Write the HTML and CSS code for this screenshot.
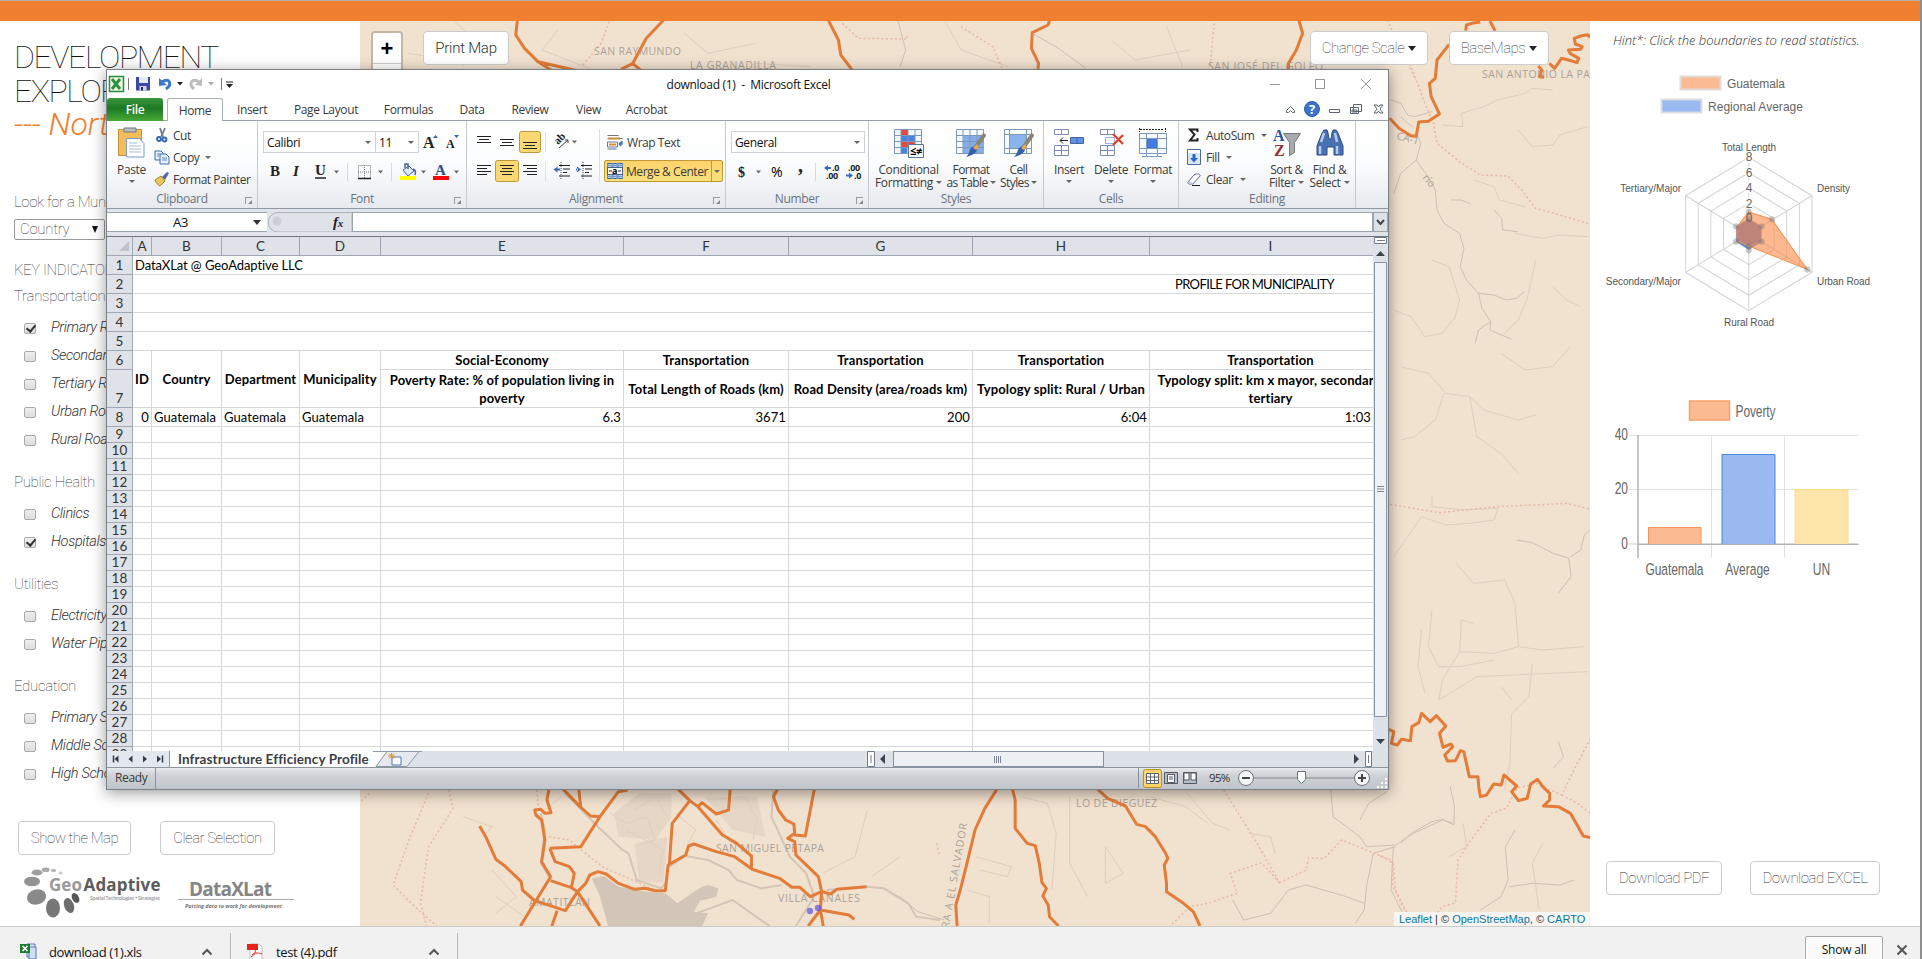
FILE: index.html
```html
<!DOCTYPE html>
<html lang="en">
<head>
<meta charset="utf-8">
<title>Development Explorer</title>
<link rel="stylesheet" href="styles.css">
</head>
<body>
<div class="page">
<header class="topbar"></header>
<main class="columns">

<aside class="sidebar">
  <h1>DEVELOPMENT<br>EXPLORER<br><em>--- Northern</em></h1>
  <p class="lead">Look for a Municipality</p>
  <div class="select"><span>Country</span><i></i></div>
  <p class="lead key">KEY INDICATORS</p>
  <section class="first"><h2>Transportation</h2>
    <label><b class="cb on"></b>Primary Roads</label><label><b class="cb"></b>Secondary Roads</label><label><b class="cb"></b>Tertiary Roads</label><label><b class="cb"></b>Urban Roads</label><label><b class="cb"></b>Rural Roads</label></section>
  <section><h2>Public Health</h2>
    <label><b class="cb"></b>Clinics</label><label><b class="cb on"></b>Hospitals</label></section>
  <section><h2>Utilities</h2>
    <label><b class="cb"></b>Electricity</label><label><b class="cb"></b>Water Pipes</label></section>
  <section><h2>Education</h2>
    <label><b class="cb"></b>Primary School</label><label><b class="cb"></b>Middle School</label><label><b class="cb"></b>High School</label></section>
  <div class="side-buttons"><button class="btn show">Show the Map</button><button class="btn clear">Clear Selection</button></div>
  <svg class="logos" viewBox="0 860 360 60" width="360" height="60">
    <g fill="#8a8a8a"><ellipse cx="60.5" cy="873" rx="2" ry="1.5" fill="#ccc"/><ellipse cx="53.5" cy="870.5" rx="2.8" ry="1.7" fill="#bbb"/><ellipse cx="45.7" cy="869.8" rx="4" ry="2.3" fill="#aaa"/><ellipse cx="37" cy="872.5" rx="5.5" ry="3" fill="#a0a0a0"/><ellipse cx="32" cy="881.5" rx="8" ry="4.8" fill="#939393"/><ellipse cx="36.5" cy="897" rx="9.7" ry="7.6" transform="rotate(-15 36.5 897)"/><ellipse cx="53" cy="908" rx="7" ry="9.5" fill="#777"/><ellipse cx="69" cy="905.5" rx="4.8" ry="7.8" fill="#6d6d6d" transform="rotate(-20 69 905.5)"/><ellipse cx="75.5" cy="898" rx="3.3" ry="5.3" fill="#555" transform="rotate(-30 75.5 898)"/></g>
    <g class="brand"><text x="49" y="890.5" font-size="17" fill="#999" textLength="33">Geo</text><text x="83.5" y="890.5" font-size="17" fill="#5c5c5c" textLength="77">Adaptive</text><text x="90" y="900" font-size="5" fill="#aaa" textLength="70">Spatial Technologies + Strategies</text><text x="189" y="896" font-size="19" fill="#858585" textLength="83">DataXLat</text><text x="185" y="908" font-size="5.5" font-style="italic" fill="#777" textLength="97">Putting data to work for development</text></g>
    <path d="M178 899.5H294" stroke="#aaa"/>
  </svg>
</aside>

<div class="map">
<svg class="map-canvas" viewBox="360 21 1230 905" width="1230" height="905">
  <g class="faint">
    <g transform="translate(1380 0) scale(.34566 .33333)">
      <path class="river" d="M40 580 60 520 105 480 118 430 110 410M105 480 135 525 160 570 165 630 185 670 230 700 243 745 232 800 250 840 285 880 295 925 320 965 318 990 380 1018M285 880 330 885 365 900 395 895 418 875M320 965 285 990 275 1030M205 600 235 600 262 612M330 630 352 655 355 690 398 695M30 300 60 310 80 345 100 350 150 335M95 380 80 370 60 350"/>
      <path d="M180 375 240 380 235 340 300 320 340 300 420 280 440 265 500 270M400 390 440 440 500 435 520 405 600 380M270 540 330 560 345 600 420 620M390 700 470 715 520 705 600 710M150 780 200 800 230 900 215 960M450 780 440 830 425 900 400 960 360 1000M40 930 90 950 130 1010 180 1000 210 960M60 1100 140 1120 190 1180 260 1190 300 1230 400 1260 450 1245M500 860 540 900 580 920M550 1040 500 1100 420 1110 350 1060M185 1180 160 1260 100 1310 60 1320M260 1190 280 1310 350 1360 400 1420"/>
    </g>
    <g transform="translate(1380 480) scale(.34626 .33333)">
      <path class="river" d="M395 180 440 188 500 220 545 235 552 290 515 340M550 230 580 210 590 165 606 150M515 785 530 830 500 865M60 1090 90 1060 150 1025 180 1018 213 1035 215 980 203 920M390 1050 362 1100 370 1200 350 1250 290 1290M375 1220 440 1210 520 1215 560 1200"/>
      <path d="M150 50 150 80 240 90 340 85 330 120 260 130 190 135 120 110 40 230M220 250 270 310 360 300 390 370 400 500 330 520 230 515 235 420 270 430M400 500 470 510 590 500M150 390 140 500 170 560 230 560 330 540M440 550 430 650 380 700 375 850 360 930M350 620 380 660M120 450 110 560 130 640M230 515 180 600 170 660 280 590 600 575M470 1090 440 1150 460 1290M240 1030 250 1100 200 1130"/>
    </g>
    <g transform="translate(900 730) scale(.44643 .33333)">
      <path class="river" d="M0 500 40 545 100 570M965 180 970 260 1030 320 1045 350 1110 345 1150 310 1215 270 1240 280M1110 350 1060 370 1045 470 1040 540 1020 580M745 510 770 570 830 550 870 480 910 465 1000 500 1040 520M1030 270 1050 220 1090 185M1105 350 1100 480 1130 560"/>
      <path d="M270 200 330 220 350 310 340 480M170 380 250 410 240 440 180 420M380 200 380 400 420 500M460 350 500 430 460 460ZM640 185 700 280 740 300M560 200 640 230 690 280M780 310 830 320 840 370M150 480 200 500 200 580"/>
    </g>
    <g transform="translate(300 730) scale(.40816 .33333)">
      <path class="wide" d="M590 250 600 300 590 400 610 440M650 190 730 290 790 360 805 370 825 450 885 475 895 460M905 410 945 378 1000 390 1050 420 1070 450 1130 475 1180 465M1160 180 1155 260 1200 380 1240 430 1260 500 1215 588M1290 480 1390 470 1430 475 1490 520 1510 560 1568 570M970 550 1060 510 1150 588"/>
      <path d="M400 260 470 290 450 320M640 200 600 240M760 250 800 280 850 260 870 330 820 350M800 300 890 360 880 430M920 250 970 300 950 340M1000 210 1090 200 1120 270 1110 330M1020 270 1060 350M900 260 870 200M860 210 820 240M1280 430 1360 380 1390 240M470 420 530 500 480 550M480 500 550 560M680 500 730 580M1400 440 1470 380"/>
      <path class="urban" d="M770 250 830 190 910 190 910 260 870 330 780 320ZM990 200 1120 200 1140 320 1060 300ZM820 340 900 320 890 460 830 450Z"/>
    </g>
    <g transform="translate(360 0) scale(.79083 .33333)"><path class="river" d="M680 60 690 150 683 200M850 100 880 140 918 205"/><path d="M60 160 120 180 170 150M120 65 145 120 130 200M250 90 230 150 290 205M410 100 440 160 500 130M500 190 570 200M740 65 760 150 820 200M950 120 980 180 1050 150M1020 80 1040 200"/></g>
  </g>
  <g class="dots">
    <path transform="translate(1380 0) scale(.34566 .33333)" d="M20 60 60 140 90 200 130 310 155 370 165 430 230 485 290 525 370 528 410 570 450 625 520 645 608 672"/>
    <path transform="translate(1380 480) scale(.34626 .33333)" d="M30 73 170 98 340 80 540 70 608 88M608 775 560 870 525 945 450 910 395 925 365 985 320 1000 270 1070 225 1140 218 1268 180 1280 150 1320M525 945 570 970 608 1000M0 1128 35 1140 38 1220 70 1290"/>
    <path transform="translate(900 730) scale(.44643 .33333)" d="M725 180 800 340 850 458 910 420 915 385 950 385 990 330 1080 380 1105 400 1110 480 1140 560M850 458 810 398 740 430 755 490 690 520 650 530 605 588"/>
    <path transform="translate(300 730) scale(.40816 .33333)" d="M170 190 110 260M315 190 270 320 228 465 290 540 335 588M365 180 375 235 315 350 295 520 310 588M580 180 585 240M610 320 660 330 740 410 870 480 920 520M1560 340 1568 380"/>
    <path transform="translate(360 0) scale(.79083 .33333)" d="M315 65 305 130 280 200M610 70 630 115 692 117 692 100M760 80 800 140 812 205M1080 70 1075 200M1325 190 1335 240"/>
  </g>
  <path class="lake" transform="translate(300 730) scale(.40816 .33333)" d="M715 445 745 438 780 470 850 485 895 490 925 520 960 490 985 470 1000 465 1025 475 1020 500 980 512 965 545 1000 550 985 588 755 588 735 500Z"/>
  <g class="place">
    <text x="594" y="55" textLength="87">SAN RAYMUNDO</text><text x="690" y="69" textLength="86">LA GRANADILLA</text><text x="1208" y="70" textLength="115">SAN JOSÉ DEL GOLFO</text><text x="1482" y="78" textLength="108">SAN ANTONIO LA PA</text><text x="716" y="852" textLength="108">SAN MIGUEL PETAPA</text><text x="529" y="906" textLength="61">AMATITLÁN</text><text x="778" y="902" textLength="82">VILLA CANALES</text><text x="1076" y="807" textLength="81">LO DE DIEGUEZ</text>
    <text transform="translate(945 950) rotate(-80)" textLength="128">RRERA A EL SALVADOR</text><text transform="translate(1422 178) rotate(50)">río</text><text transform="translate(1396 139) rotate(15)">CA-1</text>
  </g>
  <g class="roads">
    <path transform="translate(360 0) scale(.79083 .33333)" d="M199 60 197 105 208 145 225 185 245 215M225 185 275 212M384 60 362 115 345 190 330 208M345 190 357 215M592 60 605 120 608 165 623 212M872 60 870 75 850 98 849 145 858 190 857 212M1187 60 1192 100 1184 150 1174 190 1174 212"/>
    <path transform="translate(1380 0) scale(.34566 .33333)" d="M248 92 250 75 265 70 290 66M318 63 333 92M200 133 165 180 160 235 143 250 148 290 172 342 140 364 112 366 105 408 90 408 55 385 28 355M608 112 600 104 580 108 562 115 565 132 585 140 580 148 545 150 550 160 575 175 570 188 545 180 525 175 505 205 490 190M458 198 468 210 462 230 475 232"/>
    <path transform="translate(1380 480) scale(.34626 .33333)" d="M25 748 40 755 33 790 50 795 62 778 88 782 92 740 112 728 120 700 145 725 163 707 190 738 172 760 182 802 205 792 210 800 187 825 195 843 218 842 232 812 242 815 258 890 283 890 285 920 290 950 308 945 328 912 350 915 358 885 395 918 380 935 400 962 425 955 435 912 455 898 470 920 490 940 490 960 472 978 515 980 550 1000 587 1068 608 1073"/>
    <path transform="translate(300 730) scale(.40816 .33333)" d="M440 288 455 320 480 388 502 408 542 455 545 480 575 512 650 542 680 485 700 460 710 435 730 425 750 432 780 460 820 478 845 475 870 482 895 482 902 405 945 375 952 348 965 342 1020 365 1065 380 1108 418 1175 445 1205 472 1225 472 1250 500 1278 485 1300 492 1315 478 1388 470M610 178 605 210 615 248 600 250 590 238 575 240 578 255 592 270 600 330 592 395 614 440 540 588M614 452 665 473 680 485 735 588M612 355 625 395 660 410 672 430 665 473M612 355 688 350 735 260 780 185 803 180M645 178 688 232 712 258 737 260M683 178 688 232M925 176 955 212 912 280 905 402M955 212 975 230 1035 315 1070 340 1106 378 1106 415M975 230 985 218 1020 252 1050 240 1054 178M1170 178 1160 200 1172 240 1190 270 1210 282 1212 310 1195 325 1212 335 1215 375 1270 440 1278 485 1275 540 1245 588M1210 315 1238 318 1260 178M1275 540 1345 555 1358 568M1275 540 1282 588M630 542 617 588"/>
    <path transform="translate(900 730) scale(.44643 .33333)" d="M217 178 190 235 168 300 150 400 135 480 125 525 128 588M252 178 258 210 258 295 285 340 303 347 312 400 318 458 328 475 320 498 332 525 335 560 355 588M443 178 465 205 505 228 530 283 550 290 572 320 595 370 600 385 592 405 597 460 597 485 635 520 657 545 672 588"/>
  </g>
  <circle cx="810" cy="911" r="3.2" fill="#4f46e5" opacity=".65"/><circle cx="818" cy="908" r="3.2" fill="#4f46e5" opacity=".65"/>
</svg>
<div class="map-tools"><div class="zoom"><b>+</b></div><button class="btn print">Print Map</button><button class="btn scale">Change Scale<i></i></button><button class="btn base">BaseMaps<i></i></button></div>
<div class="credit"><a>Leaflet</a> | © <a>OpenStreetMap</a>, © <a>CARTO</a></div>
</div>

<aside class="stats">
  <p class="hint">Hint*: Click the boundaries to read statistics.</p>
  <svg class="charts" viewBox="1590 60 330 530" width="330" height="530">
    <g font-size="12" fill="#666">
      <rect x="1680.5" y="76.5" width="40" height="13" fill="#fcba92" stroke="#e2dcd8" stroke-width="2"/><text x="1727" y="87.5" textLength="58">Guatemala</text>
      <rect x="1661.5" y="99.5" width="40" height="13" fill="#99b9f0" stroke="#dadde2" stroke-width="2"/><text x="1708" y="111" textLength="95">Regional Average</text>
    </g>
    <g transform="translate(1748.8 234) scale(1 1.05)">
      <g fill="none" stroke="#d4d4d4"><path d="M0-73 63.2-36.5V36.5L0 73-63.2 36.5V-36.5Z"/><path d="M0-58.4 50.6-29.2V29.2L0 58.4-50.6 29.2V-29.2Z"/><path d="M0-43.8 37.9-21.9V21.9L0 43.8-37.9 21.9V-21.9Z"/><path d="M0-29.2 25.3-14.6V14.6L0 29.2-25.3 14.6V-14.6Z"/><path d="M0-14.6 12.6-7.3V7.3L0 14.6-12.6 7.3V-7.3Z"/><path d="M0-73V73M63.2-36.5-63.2 36.5M63.2 36.5-63.2-36.5"/></g>
      <path d="M0-14.6 12.6-7.3V7.3L0 15-12.6 7.3V-7.3Z" fill="#3f6fca" fill-opacity=".8"/>
      <path d="M0-21 23-14 58.5 33.8 0 11.5-11.5 6.5-12-6.8Z" fill="#fb8d4b" fill-opacity=".62" stroke="#ee9355"/>
      <path d="M0-13.5 11.5-7V6.500L0 11-11.5 6.500V-6.800Z" fill="#bd8078" fill-opacity=".75"/>
      <g fill="#777" fill-opacity=".4"><circle cy="-21" r="3"/><circle cx="23" cy="-14" r="3"/><circle cx="58.5" cy="33.8" r="3"/><circle cy="11.5" r="3"/><circle cy="15.5" r="3"/><circle cx="12.8" cy="-7.3" r="3"/><circle cx="12.8" cy="7.3" r="3"/><circle cx="-12.8" cy="7.3" r="3"/><circle cx="-12.8" cy="-7.3" r="3"/><circle cy="-14.6" r="3"/></g>
    </g>
    <g fill="#fff" fill-opacity=".75"><path d="M1745 151h8v12h-8zM1745 166h8v12h-8zM1745 181h8v12h-8zM1745 197h8v12h-8z"/></g>
    <g font-size="10" fill="#555" text-anchor="middle"><text x="1749" y="150.8" textLength="54">Total Length</text><text x="1749" y="326" textLength="50">Rural Road</text><text x="1833.5" y="192" textLength="33">Density</text><text x="1843.5" y="285" textLength="53">Urban Road</text><text x="1650.7" y="192" textLength="61">Tertiary/Major</text><text x="1643.3" y="285" textLength="75">Secondary/Major</text></g>
    <g font-size="12" fill="#666" text-anchor="middle"><text x="1749" y="161">8</text><text x="1749" y="176.5">6</text><text x="1749" y="192">4</text><text x="1749" y="207.5">2</text><text x="1749" y="221.5">0</text></g>
    <path d="M1629 435.5H1858.500M1629 489.500H1858.500M1711.500 435V558M1784.500 435V558" stroke="#e2e2e2"/><path d="M1629 544H1637" stroke="#ccc"/>
    <path d="M1638 435V558M1638 544.300H1858.500" stroke="#b3b3b3" stroke-width="1.500"/>
    <path d="M1648.500 544V527.500H1701V544" fill="#fcba92" stroke="#f9935a"/><path d="M1722 544V454.500H1775V544" fill="#99b9f0" stroke="#4f86e3"/><path d="M1795 544V489.500H1848V544" fill="#fee6aa" stroke="#fddc86"/>
    <rect x="1689.500" y="401" width="40" height="19" fill="#fcba92" stroke="#f9a06a" stroke-width="1.500"/>
    <g font-size="12" fill="#666"><text transform="translate(1735.500 417) scale(1 1.420)" textLength="40">Poverty</text><g text-anchor="end"><text transform="translate(1628 440) scale(1 1.420)">40</text><text transform="translate(1628 494) scale(1 1.420)">20</text><text transform="translate(1628 548.500) scale(1 1.420)">0</text></g><g text-anchor="middle"><text transform="translate(1674.500 575) scale(1 1.420)" textLength="58">Guatemala</text><text transform="translate(1747.500 575) scale(1 1.420)">Average</text><text transform="translate(1821.500 575) scale(1 1.420)">UN</text></g></g>
  </svg>
  <div class="downloads"><button class="btn">Download PDF</button><button class="btn xl">Download EXCEL</button></div>
</aside>
</main>

<footer class="shelf">
  <div class="file f1"><svg width="17" height="17" viewBox="0 0 17 17"><path d="M7 1h8v13H7z" fill="#dfe9f8" stroke="#5a78ae"/><path d="M9 4h7v12H9z" fill="#cfe0f6" stroke="#5a78ae"/><path d="M0 1h10v9H0z" fill="#1f7a2f"/><path d="M2.500 3 7.500 8M7.500 3 2.500 8" stroke="#fff" stroke-width="1.700"/></svg><span class="n1">download (1).xls</span><svg width="12" height="8" viewBox="0 0 12 8"><path d="M1.500 6.500 6 2l4.500 4.500" fill="none" stroke="#555" stroke-width="2"/></svg></div>
  <div class="file f2"><svg width="17" height="17" viewBox="0 0 17 17"><path d="M3 1h9l3 3v13H3z" fill="#fff" stroke="#bbb"/><path d="M0 1h11v6H0z" fill="#e3231b"/><path d="M4 14c4-2 5-6 4-8M5 12c3-3 7-2 10-1" stroke="#e3231b" fill="none"/></svg><span class="n2">test (4).pdf</span><svg width="12" height="8" viewBox="0 0 12 8"><path d="M1.500 6.500 6 2l4.500 4.500" fill="none" stroke="#555" stroke-width="2"/></svg></div>
  <button class="show-all">Show all</button>
  <svg class="x" width="12" height="12" viewBox="0 0 12 12"><path d="M1.500 1.500l9 9m0-9l-9 9" stroke="#555" stroke-width="2"/></svg>
</footer>
</div>

<div class="excel">
  <div class="title">
    <svg viewBox="107 70 130 28" width="130" height="28">
      <path d="M109.500 76.500h14v15h-14z" fill="#eef7ea" stroke="#2d8a3c" stroke-width="1.500"/><path d="M112 79l8 10M120 79l-8 10" stroke="#2c9440" stroke-width="3"/><path d="M128.500 78v12M221.500 78v12" stroke="#777"/>
      <path d="M136 77h14v13.500h-14z" fill="#3c46a6"/><path d="M139 77h9v6h-9z" fill="#e3e9f7"/><path d="M139.500 86h7v4.500h-7z" fill="#cfd3e2"/><path d="M141 87h2v3.500h-2z" fill="#23296e"/>
      <path d="M162 82c7-5 11 2 4 7" fill="none" stroke="#3f77c9" stroke-width="3"/><path d="M159 78l0 8 8-1z" fill="#3f77c9"/><path d="M199 82c-7-5-11 2-5 7" fill="none" stroke="#bcbcbc" stroke-width="3"/><path d="M202 78v8l-7-1z" fill="#bcbcbc"/>
      <path d="M177 82h6l-3 3.500zM226 84h7l-3.500 4z" fill="#222"/><path d="M226 82h7" stroke="#222"/><path d="M208 82h6l-3 3.500z" fill="#aaa"/>
    </svg>
    <span>download (1)&nbsp; -&nbsp; Microsoft Excel</span>
    <svg viewBox="1260 70 128 28" width="128" height="28" fill="none" stroke="#999"><path d="M1270 84.500h10M1315.500 79.500h9v9h-9zM1361 79l10 10m0-10l-10 10"/></svg>
  </div>
  <nav class="tabs"><span class="file-tab">File</span><span class="active">Home</span><span class="w58">Insert</span><span class="w90">Page Layout</span><span class="w75">Formulas</span><span class="w52">Data</span><span class="w64">Review</span><span class="w53">View</span><span class="w63">Acrobat</span>
    <svg viewBox="1280 98 108 23" width="108" height="23" fill="none" stroke="#5b6470"><path d="M1286.500 110.500l4-4 4 4v2h-2l-2-2-2 2h-2z"/><circle cx="1312" cy="109" r="7.500" fill="#3a73c9" stroke="#2c5faf"/><text x="1312" y="114" text-anchor="middle" font-size="13" font-weight="700" fill="#fff" stroke="none">?</text><path d="M1329.500 109.500h10v3h-10zM1353.500 104.500h8v7h-8zM1350.500 107.500h8v6h-8z" /><path d="M1352 110h5v2h-5z"/><path d="M1374 105h3l1.500 2 1.500-2h3l-3 4 3 4h-3l-1.500-2-1.500 2h-3l3-4z"/></svg>
  </nav>
  <div class="ribbon">
    <div class="group g-clip"><div class="body">
      <div class="big paste"><svg viewBox="119 127 27 32" width="27" height="32"><path d="M119.500 129.500h23v26h-23z" fill="#f3bd5c" stroke="#c98f35"/><path d="M125 128h12v4h-12z" fill="#b9bec6" stroke="#6f7681"/><path d="M127.500 138.500h13l4.500 5v13.500h-17.500z" fill="#fff" stroke="#7b9cc8"/><path d="M130 143h8M130 146h12M130 149h12M130 152h12" stroke="#a9bfdc"/></svg><span>Paste</span><i></i></div>
      <div class="list"><div><svg width="16" height="16" viewBox="0 0 16 16"><path d="M6 1l3 9M11 1L7 10" stroke="#6f7c90" stroke-width="1.800"/><circle cx="5" cy="12" r="2" fill="none" stroke="#2f62b5" stroke-width="1.800"/><circle cx="10.500" cy="12.500" r="2" fill="none" stroke="#2f62b5" stroke-width="1.800"/></svg>Cut</div><div><svg width="16" height="16" viewBox="0 0 16 16"><path d="M1 2h6l2 2v7H1z" fill="#e8f1fd" stroke="#3c6fb8"/><path d="M6 5h6l3 3v7H6z" fill="#e8f1fd" stroke="#3c6fb8"/><path d="M8 9h5M8 11h5M3 5h3M3 7h2" stroke="#5e88c5"/></svg>Copy<i></i></div><div><svg width="16" height="16" viewBox="0 0 16 16"><path d="M1 9l6-4 4 5-5 5c-2-1-4-3-5-6z" fill="#ecc95c" stroke="#a5822c"/><path d="M8 6l5-5 2 1-4 7z" fill="#5866a5"/></svg>Format Painter</div></div>
    </div><footer>Clipboard<u></u></footer></div>
    <div class="group g-font"><div class="body rows">
      <div class="row"><div class="combo c1">Calibri<i></i></div><div class="combo c2">11<i></i></div>
        <svg viewBox="420 132 42 22" width="42" height="22" class="serif" font-weight="700"><text x="422" y="149" font-size="16">A</text><text x="445" y="149" font-size="12">A</text><path d="M432 139l2.500-3 2.500 3zM453 136h5l-2.500 3z" fill="#3e63ad"/></svg></div>
      <svg class="r2" viewBox="263 160 200 24" width="200" height="24"><g class="serif" font-weight="700" font-size="15"><text x="270" y="176">B</text><text x="293" y="176" font-style="italic">I</text><text x="315" y="175">U</text></g><path d="M315 178h11" stroke="#222" stroke-width="1.500"/><path d="M347.500 163v18M391.500 163v18" stroke="#d5d8dd"/><path d="M358.500 165.500h12v13h-12zM364.500 165v13M358 172h13" fill="none" stroke="#777" stroke-dasharray="1 1"/><path d="M358 178.500h13" stroke="#222" stroke-width="1.500"/><path d="M403 170l6-4 5 5-6 5z" fill="#dce9f8" stroke="#45679c"/><path d="M405 168v-4h3v5M413 169c3 1 3 3 2 6" fill="none" stroke="#45679c" stroke-width="1.500"/><path d="M400 176h16v4h-16z" fill="#ff0"/><path d="M433 176h16v4h-16z" fill="#f00"/><text class="serif blue" x="435" y="175" font-size="15" font-weight="700">A</text><path class="car" d="M334 170.500h5l-2.500 3zM378 170.500h5l-2.500 3zM421 170.500h5l-2.500 3zM454 170.500h5l-2.500 3z"/></svg>
    </div><footer>Font<u></u></footer></div>
    <div class="group g-align"><div class="body">
      <svg viewBox="467 128 136 60" width="136" height="60"><rect x="519.500" y="132.500" width="21" height="21" rx="2" fill="#fcd874" stroke="#c2963a"/><rect x="495.500" y="161.500" width="23" height="21" rx="2" fill="#fcd874" stroke="#c2963a"/><path d="M545.500 133v20M545.500 163v20M599.500 130v54" stroke="#dcdfe3"/><g stroke="#222" stroke-width="1.200"><path d="M477 137.500h14M479 140.500h10M477 143.500h14M500 140.500h14M502 143.500h10M500 146.500h14M523 143.500h14M525 146.500h10M523 149.500h14M477 166.500h14M477 169.500h10M477 172.500h14M477 175.500h10M500 166.500h14M502 169.500h10M500 172.500h14M502 175.500h10M523 166.500h14M527 169.500h10M523 172.500h14M527 175.500h10M559 166.500h11M563 170h7M563 173.500h4M559 177h11M581 166.500h11M585 170h7M585 173.500h4M581 177h11"/></g><path d="M561 163v17M583 163v17" stroke="#444" stroke-dasharray="1 1"/><path d="M553.500 170.500l4-3v6zM581 170.500l-4-3v6zM557 169.500h3v2h-3zM576 169.500h2v2h-2z" fill="#3a6ac1"/><text class="serif" transform="translate(558 146) rotate(-45)" font-size="11" font-weight="700">ab</text><path d="M559 149l9-8m0 0v3m0-3h-3" fill="none" stroke="#444"/><path class="car" d="M572 141.500h5l-2.500 3z"/></svg>
      <div class="wraps"><div class="wrap"><svg width="17" height="16" viewBox="0 0 17 16"><path d="M.5 1.500h11M.5 4.500h15" stroke="#777"/><path d="M1 4.500h12" stroke="#c58a3c" stroke-width="2"/><path d="M.5 8h10v5H.5z" fill="#fff" stroke="#6b7a8e"/><path d="M2 10.500h7" stroke="#d98a2d" stroke-width="2"/><path d="M.5 15h9" stroke="#58779f"/><path d="M15 7v3h-3m0 0l2-2m-2 2l2 2" fill="none" stroke="#356db5" stroke-width="1.300"/></svg>Wrap Text</div><div class="merge"><svg width="16" height="16" viewBox="0 0 16 16"><path d="M.5.5h15v15H.5z" fill="#fff" stroke="#44658f"/><path d="M0 2.500h16M0 13.500h16M5.500 0v4M10.500 0v4M5.500 12v4M10.500 12v4" stroke="#6f9ad0" stroke-width="2"/><path d="M.5 4.500h15v7H.5z" fill="#fff" stroke="#44658f"/><path d="M2 8h3M11 8h3" stroke="#222"/><text x="5" y="11" font-size="9" font-weight="700">a</text></svg><span>Merge &amp; Center</span><b><i></i></b></div></div>
    </div><footer>Alignment<u></u></footer></div>
    <div class="group g-num"><div class="body rows"><div class="combo c3">General<i></i></div>
      <svg class="r2" viewBox="731 160 134 24" width="134" height="24"><text x="738" y="177" font-size="14" font-weight="700" class="serif">$</text><text x="771" y="177" font-size="14">%</text><text x="798" y="172" font-size="20" font-weight="700" class="serif">,</text><path class="car" d="M756 170.500h5l-2.500 3z"/><path d="M815.500 163v18" stroke="#d5d8dd"/><g font-size="9" font-weight="700" fill="#222"><text x="832" y="171">.0</text><text x="826" y="178.500">.00</text><text x="848" y="171">.00</text><text x="854" y="178.500">.0</text></g><path d="M824 168l4-3v2h3v2h-3v2zM853 175.500l-4-3v2h-3v2h3v2z" fill="#356bc4"/></svg>
    </div><footer>Number<u></u></footer></div>
    <div class="group g-styles"><div class="body">
      <div class="big b79"><svg width="30" height="30" viewBox="0 0 30 30"><path d="M.5 1.500h27v24H.5z" fill="#f2f7fd" stroke="#7e98bc"/><path d="M7 2h7v5H7zM7 14h14v6H7z" fill="#e24a3b"/><path d="M7 8h14v5H7zM7 20h6v5H7z" fill="#4a83dd"/><path d="M0 7.500h28M0 13.500h28M0 19.500h28M7 1v25M14 1v25M21 1v25" stroke="#7e98bc"/><path d="M14.500 16.500h15v13h-15z" fill="#f7f9fd" stroke="#5b78a5"/><text x="16" y="27" font-size="11" font-weight="700">≤≠</text></svg><span>Conditional</span><span>Formatting<i></i></span></div>
      <div class="big b46"><svg width="30" height="30" viewBox="0 0 30 30"><path d="M.5 1.500h27v24H.5z" fill="#f7fafd" stroke="#7e98bc"/><path d="M7 7h21v18H7z" fill="#84aeea"/><path d="M0 7.500h28M0 13.500h28M0 19.500h28M7 1v25M14 1v25M21 1v25" stroke="#7e98bc"/><path d="M29 6L19 20" stroke="#8a8578" stroke-width="4"/><path d="M20 18c2 3 2 8-10 11 4-3 3-8 6-10z" fill="#365fa7"/><path d="M17 20l4-4 2 3-3 3z" fill="#e5a94f"/></svg><span>Format</span><span>as Table<i></i></span></div>
      <div class="big b48"><svg width="30" height="30" viewBox="0 0 30 30"><path d="M.5 1.500h27v24H.5z" fill="#f7fafd" stroke="#7e98bc"/><path d="M0 6.500h28M0 20.500h28M5.500 1v25M22.500 1v25" stroke="#7e98bc"/><path d="M6 7h16v13H6z" fill="#8ab3ee"/><path d="M29 6L19 20" stroke="#8a8578" stroke-width="4"/><path d="M20 18c2 3 2 8-10 11 4-3 3-8 6-10z" fill="#365fa7"/><path d="M17 20l4-4 2 3-3 3z" fill="#e5a94f"/></svg><span>Cell</span><span>Styles<i></i></span></div>
    </div><footer>Styles</footer></div>
    <div class="group g-cells"><div class="body">
      <div class="big b42"><svg width="30" height="30" viewBox="0 0 30 30"><path d="M.5 1.500h14v5H.5zM7.500 1v5M.5 17.500h14v10H.5zM7.500 17v10M.5 22.500h14" fill="#fff" stroke="#7e8ea8"/><path d="M16.500 9.500h13v6h-13z" fill="#5e93e4" stroke="#41649d"/><path d="M23 10v6" stroke="#41649d"/><path d="M6 12.500h8m-8 0l3-3m-3 3l3 3" stroke="#222" fill="none"/></svg><span>Insert</span><i></i></div>
      <div class="big b42"><svg width="30" height="30" viewBox="0 0 30 30"><path d="M4.500 1.500h14v5h-14zM11.500 1v5M4.500 17.500h14v10h-14zM11.500 17v10M4.500 22.500h14" fill="#fff" stroke="#7e8ea8"/><path d="M9.500 9.500h9v6h-9z" fill="#fff" stroke="#3a6ac1" stroke-dasharray="1 1"/><path d="M17 6l10 10M27 7L17 17" stroke="#ea3a24" stroke-width="2.200"/></svg><span>Delete</span><i></i></div>
      <div class="big b42"><svg width="30" height="30" viewBox="0 0 30 30"><path d="M1.500 5.500h27v20h-27z" fill="#f7fafd" stroke="#7e98bc"/><path d="M1 10.500h28M1 20.500h28M8.500 5v24M19.500 5v24M4 28.500h20" stroke="#7e98bc"/><path d="M9 11h10v9H9z" fill="#3f7be0"/><path d="M2 1.500h24M1.500 0v4M27.500 0v4" stroke="#222" stroke-dasharray="2 1"/></svg><span>Format</span><i></i></div>
    </div><footer>Cells</footer></div>
    <div class="group g-edit"><div class="body">
      <div class="list"><div><svg width="16" height="16" viewBox="0 0 16 16"><path d="M11.500 5V2.500H4l4.500 5-4.500 6h7.500V11" fill="none" stroke="#222" stroke-width="2"/></svg>AutoSum<i></i></div><div><svg width="16" height="16" viewBox="0 0 16 16"><path d="M1.500.5h13v15h-13z" fill="#d9e7fa" stroke="#4b6ca3"/><path d="M2 1h12v3H2z" fill="#fff"/><path d="M6.500 5h3v4H12l-4 4.500L4 9h2.500z" fill="#2c66cc"/></svg>Fill<i></i></div><div><svg width="16" height="16" viewBox="0 0 16 16"><path d="M2 11l6-7c2-2 7-1 6 1l-7 8c-2 1-6 0-5-2z" fill="#fff" stroke="#5c6c8c"/><path d="M2 11c2-1 4 0 5 2l-2 1z" fill="#bcc8e4"/><path d="M6 14.500h8" stroke="#222"/></svg>Clear<i></i></div></div>
      <div class="big b43 sort"><svg width="30" height="30" viewBox="0 0 30 30"><text class="serif azure" x="1" y="13" font-size="16" font-weight="700">A</text><text class="serif red" x="2" y="28" font-size="16" font-weight="700">Z</text><path d="M11.500 5.500h17l-6 9v10l-5 3v-13z" fill="#a8aaad" stroke="#77797c"/></svg><span>Sort &amp;</span><span>Filter<i></i></span></div>
      <div class="big b43"><svg width="30" height="30" viewBox="0 0 30 30"><path d="M7 5l2-3h3l1 3 1 6h2l1-6 1-3h3l2 3 5 13v9h-9v-8h-7v8H2v-9z" fill="#4a72b2" stroke="#2b4a80"/><path d="M5 18v8M22 18v8M9 5l-3 9M20 5l2 9" stroke="#b6cbed" stroke-width="2.500"/></svg><span>Find &amp;</span><span>Select<i></i></span></div>
    </div><footer>Editing</footer></div>
  </div>
  <div class="formula"><div class="name">A3<i></i></div><svg viewBox="267 212 85 20" width="85" height="20"><path d="M352 212.500h-74a9.500 9.500 0 0 0 0 19.500h74z" fill="#dfe3e9" stroke="#a9b0bb"/><circle cx="277" cy="221" r="4.500" fill="#cbd0d7"/><text class="serif" x="333" y="227" font-size="15" font-weight="700" font-style="italic">f<tspan font-size="11">x</tspan></text></svg><div class="input"></div><div class="expand"><svg width="9" height="7" viewBox="0 0 9 7"><path d="M1 1l3.500 4L8 1" fill="none" stroke="#444" stroke-width="2"/></svg></div></div>
  <div class="work">
    <div class="clip"><table class="sheet"><colgroup><col class="k0"><col class="k1"><col class="k2"><col class="k3"><col class="k4"><col class="k5"><col class="k6"><col class="k7"><col class="k8"><col class="k9"></colgroup>
      <tr class="head"><th><svg width="10" height="10" viewBox="0 0 10 10"><path d="M10 0v10H0z" fill="#bcc3cc"/></svg><th>A<th>B<th>C<th>D<th>E<th>F<th>G<th>H<th>I
      <tr class="t open"><th>1<td colspan="9" class="l heading">DataXLat @ GeoAdaptive LLC
      <tr class="t open"><th>2<td colspan="9" class="profile">PROFILE FOR MUNICIPALITY
      <tr class="t open"><th>3<td colspan="9">
      <tr class="t open"><th>4<td colspan="9">
      <tr class="t open"><th>5<td colspan="9">
      <tr class="t bold"><th>6<td rowspan="2">ID<td rowspan="2">Country<td rowspan="2">Department<td rowspan="2">Municipality<td>Social-Economy<td>Transportation<td>Transportation<td>Transportation<td>Transportation
      <tr class="tt bold"><th>7<td>Poverty Rate: % of population living in<br>poverty<td>Total Length of Roads (km)<td>Road Density (area/roads km)<td>Typology split: Rural / Urban<td>Typology split: km x mayor, secondary,<br>tertiary
      <tr class="t"><th>8<td class="r">0<td class="l">Guatemala<td class="l">Guatemala<td class="l">Guatemala<td class="r">6.3<td class="r">3671<td class="r">200<td class="r">6:04<td class="r last">1:03
      <tr><th>9<td><td><td><td><td><td><td><td><td><tr><th>10<td><td><td><td><td><td><td><td><td><tr><th>11<td><td><td><td><td><td><td><td><td><tr><th>12<td><td><td><td><td><td><td><td><td><tr><th>13<td><td><td><td><td><td><td><td><td><tr><th>14<td><td><td><td><td><td><td><td><td><tr><th>15<td><td><td><td><td><td><td><td><td><tr><th>16<td><td><td><td><td><td><td><td><td><tr><th>17<td><td><td><td><td><td><td><td><td><tr><th>18<td><td><td><td><td><td><td><td><td><tr><th>19<td><td><td><td><td><td><td><td><td><tr><th>20<td><td><td><td><td><td><td><td><td><tr><th>21<td><td><td><td><td><td><td><td><td><tr><th>22<td><td><td><td><td><td><td><td><td><tr><th>23<td><td><td><td><td><td><td><td><td><tr><th>24<td><td><td><td><td><td><td><td><td><tr><th>25<td><td><td><td><td><td><td><td><td><tr><th>26<td><td><td><td><td><td><td><td><td><tr><th>27<td><td><td><td><td><td><td><td><td><tr><th>28<td><td><td><td><td><td><td><td><td><tr><th>29<td><td><td><td><td><td><td><td><td>
    </table></div>
    <svg class="vbar" viewBox="1373 237 15 514" width="15" height="514"><path d="M1373 237h15v514h-15z" fill="#dde2ea"/><path d="M1374.500 237.500h12v6h-12z" fill="#fff" stroke="#70798a"/><path d="M1377 240.500h8" stroke="#70798a"/><path d="M1376 256h9l-4.500-5zM1376 739h9l-4.500 5z" fill="#3c4350"/><path d="M1374.500 262.500h12v454h-12z" fill="#eff2f7" stroke="#8592a6"/><path d="M1377 486.500h7M1377 489h7M1377 491.500h7" stroke="#7e8897"/></svg>
  </div>
  <div class="sheets">
    <svg viewBox="107 751 63 16" width="63" height="16"><path d="M107 751h62v16h-62z" fill="#e3e7ee"/><path d="M169.500 751v16" stroke="#8c97a8"/><path d="M118.500 755.500v7l-4-3.500zM132.500 755.500v7l-4-3.500zM143 755.500v7l4-3.500zM157 755.500v7l4-3.500z" fill="#333b4a"/><path d="M113.500 755.500v7M162.500 755.500v7" stroke="#333b4a" stroke-width="1.500"/></svg>
    <b>Infrastructure Efficiency Profile</b>
    <svg viewBox="372 751 50 16" width="50" height="16"><path d="M372 751h15l-11 16h-4z" fill="#fff"/><path d="M376 766.500l11-15h32l-12 15zM373 751.500h49" fill="#e6eaf0" stroke="#8c97a8"/><path d="M392 757h9v8h-9z" fill="#fff" stroke="#5474ac"/><path d="M388 756h7M391.500 753v7M389 753.500l5 5m0-5l-5 5" stroke="#e3962c"/></svg>
    <span class="sp"></span>
    <svg viewBox="865 751 508 16" width="508" height="16"><path d="M867.500 751.500h7v15h-7zM1365.500 751.500h6v15h-6z" fill="#fff" stroke="#717b8b"/><path d="M871 755v8M1368.500 755v8" stroke="#717b8b"/><path d="M885 754v10l-5-5zM1354 754v10l5-5z" fill="#3c4350"/><rect x="893.500" y="751.500" width="210" height="15" fill="#ecf0f5" stroke="#8592a6"/><path d="M994.500 756v7M996.500 756v7M998.500 756v7M1000.500 756v7" stroke="#7e8897"/></svg>
  </div>
  <div class="status"><span>Ready</span>
    <svg viewBox="1135 768 253 21" width="253" height="21"><path d="M1138.500 768v20" stroke="#8d949c"/><rect x="1143.500" y="769.500" width="18" height="18" rx="2" fill="#fdd667" stroke="#bd8c22"/><path d="M1146.500 773.500h12v10h-12zM1150.500 773v11M1154.500 773v11M1146 777h13M1146 780.500h13" fill="#fff" stroke="#5e6570"/><path d="M1164.500 772.500h13v11h-13zM1183.500 772.500h13v11h-13z" fill="#b9bfc8" stroke="#525a66"/><path d="M1167.500 774.500h7v8h-7zM1184 773h5v7h-5zM1191 773h5v7h-5z" fill="#fff" stroke="#525a66"/><path d="M1169 777h4M1169 779h4" stroke="#525a66"/><text x="1209" y="782" font-size="11.500" textLength="21" fill="#333">95%</text><path d="M1254 778h100" stroke="#80868f"/><circle cx="1246" cy="778" r="7.500" fill="#f4f5f7" stroke="#6b727c"/><circle cx="1362" cy="778" r="7.500" fill="#f4f5f7" stroke="#6b727c"/><path d="M1242 778h8M1358 778h8M1362 774v8" stroke="#444" stroke-width="2"/><path d="M1297.500 771.500h8v8l-4 4-4-4z" fill="#fff" stroke="#6b727c"/><path d="M1386 778v10M1382 782v6M1378 786v2" stroke="#fff" stroke-width="2" stroke-dasharray="2 2"/></svg>
  </div>
</div>
</body>
</html>
```
FILE: styles.css
```css
*{box-sizing:border-box}
body{margin:0;width:1922px;height:959px;overflow:hidden;background:#fff;font-family:Roboto,sans-serif;color:#333}
svg{display:block;flex:none}
button{font:inherit;color:inherit}
.page{display:flex;flex-direction:column;height:959px;border-right:2px solid #8f8f8f}
.topbar{height:21px;background:#f08030;border-top:1px solid #b4aca6}
.columns{display:flex;height:905px}
.sidebar{width:360px;overflow:hidden;white-space:nowrap;font-weight:100}
.sidebar h1{margin:20px 0 0 14px;font-size:32px;line-height:33.500px;font-weight:100;letter-spacing:-1.400px;color:#111}
.sidebar h1 em{font-weight:300;color:#f08030;letter-spacing:0}
.lead{margin:51px 0 0 14px;font-size:15px;line-height:18px;letter-spacing:-.4px}
.lead.key{margin-top:21px}
.select{margin:8px 0 0 14px;width:91px;height:21px;border:1px solid #999;border-radius:2px;display:flex;align-items:center;justify-content:space-between;padding:0 6px 0 5px;font-size:15px;letter-spacing:-.3px}
.select i{border:3px solid transparent;border-top:7px solid #111;border-bottom:0}
.sidebar section{margin-top:19px}
.sidebar section.first{margin-top:8px}
.sidebar h2{margin:0 0 9px 14px;font-size:15px;line-height:18px;font-weight:100;letter-spacing:-.3px}
.sidebar label{display:flex;align-items:center;height:28px;padding-left:24px;font-size:14.500px;font-style:italic;font-weight:300;letter-spacing:-.35px}
.cb{width:12px;height:11px;margin-right:15px;border:1px solid #aaa;border-radius:2px;background:linear-gradient(#eee,#ddd);position:relative;top:1px}
.cb.on::after{content:"";position:absolute;left:3px;top:-1px;width:4px;height:7px;border:solid #333;border-width:0 2px 2px 0;transform:rotate(40deg)}
.btn{height:34px;padding:0;border:1px solid #ccc;border-radius:4px;background:#fff;font-size:16px;font-weight:100;letter-spacing:-.5px;white-space:nowrap}
.side-buttons{display:flex;gap:29px;margin:33px 0 0 18px}
.show{width:113px}.clear{width:115px}
.side-buttons .btn{font-size:15px}
.logos{margin-top:5px}
.brand{font-family:"Open Sans",sans-serif;font-weight:700}
.map{width:1230px;background:#f1e1cf;overflow:hidden;position:relative}
.map-canvas path{vector-effect:non-scaling-stroke;fill:none}
.roads{stroke:#e27c38;stroke-width:3;stroke-linejoin:round}
.faint path{stroke:#dfcebe;stroke-width:1}
.faint .river{stroke:#cdbfb3}
.faint .wide{stroke:#d2c5b7;stroke-width:2}
.faint .urban{fill:#decfc0;stroke:none;opacity:.6}
.dots path{stroke:#e8b8a5;stroke-width:1.500;stroke-dasharray:2 2.500}
.map-canvas .lake{fill:#d3c5b7}
.place{font:10.500px "Open Sans",sans-serif;fill:#aba199}
.map-tools{position:absolute;left:0;top:0;width:1230px;padding:10px 0 0 11px;display:flex;align-items:flex-start}
.zoom{width:32px;height:62px;border:2px solid #c7b5a5;border-radius:4px;background:#fff;color:#000;font:700 22px/31px "Liberation Sans",sans-serif;text-align:center}
.zoom b{display:block;border-bottom:1px solid #ccc;height:31px}
.print{width:86px;margin-left:20px;font-size:15px;font-weight:300}
.map-tools .print{letter-spacing:-.25px}
.scale{width:118px;margin-left:801px}
.base{width:100px;margin-left:21px}
.btn i{display:inline-block;border:4px solid transparent;border-top:5px solid #222;border-bottom:0;margin:0 0 2px 4px}
.map-tools .scale,.map-tools .base{font-size:15px}
.credit{position:absolute;right:0;bottom:0;height:14px;padding:0 5px;background:rgba(255,255,255,.7);font:11px/15px "Liberation Sans",sans-serif;width:196px;white-space:nowrap}
.credit a{color:#0078a8}
.stats{width:330px;display:flex;flex-direction:column}
.hint{margin:9px 0 0 23px;height:30px;font:italic 300 13px/20px "Open Sans",sans-serif;letter-spacing:-.05px;white-space:nowrap;color:#333}
.charts{font-family:"Liberation Sans",sans-serif}
.downloads{display:flex;gap:28px;margin:271px 0 0 16px}
.downloads .btn{width:116px;font-size:15px}
.downloads .xl{width:130px}
.shelf{height:33px;background:#f1f1f1;border-top:1px solid #ccc;display:flex;align-items:flex-start;font:13px "Open Sans",sans-serif;color:#111;white-space:nowrap}
.file{display:flex;align-items:center;height:26px;margin-top:6px;padding:11px 0 0;border-right:1px solid #bbb}
.f1{width:231px;padding-left:20px}.f2{width:227px;padding-left:16px}
.file span{letter-spacing:-.35px}
.n1{margin-left:12px;width:152px}.n2{margin-left:12px;width:152px}
.show-all{margin:9px 0 0 1347px;width:78px;height:30px;padding:0 0 3px;border:1px solid #aaa;border-radius:2px;background:#fbfbfb;font-size:12px;letter-spacing:-.2px}
.x{margin:17px 0 0 13px}

.excel{position:absolute;left:106px;top:69px;width:1283px;height:721px;border:1px solid #7b7f86;background:#fff;box-shadow:0 3px 14px rgba(0,0,0,.4);display:flex;flex-direction:column;font-family:"Open Sans",sans-serif;font-size:12px;letter-spacing:-.35px;color:#3b3b3b;white-space:nowrap}
.excel i{display:inline-block;border:3px solid transparent;border-top:3px solid #666;border-bottom:0;margin-left:5px;vertical-align:2px;flex:none}
.serif{font-family:"Liberation Serif",serif;fill:#222}
.blue{fill:#2f4f94}.azure{fill:#2c56a4}.red{fill:#943130}
.car{fill:#666}
.title{display:flex;height:28px;align-items:center;justify-content:space-between;color:#111}
.title span{letter-spacing:-.3px}
.tabs{display:flex;height:23px;line-height:24px;text-align:center;border-bottom:1px solid #9ba1aa;flex:none}
.tabs svg{margin-left:auto;letter-spacing:0}
.file-tab{width:56px;height:23px;background:linear-gradient(#3b9441,#1b7a22 45%,#47a936);color:#fff;font-weight:600;border-radius:3px 3px 0 0}
.active{width:56px;height:23px;margin-left:4px;border:1px solid #aab0b8;border-bottom:0;border-radius:3px 3px 0 0;background:#fff}
.w58{width:58px}.w90{width:90px}.w75{width:75px}.w52{width:52px}.w64{width:64px}.w53{width:53px}.w63{width:63px}
.ribbon{display:flex;height:88px;background:linear-gradient(#fff,#fbfcfd 50%,#e6e9ee);border-bottom:1px solid #8f98a5;flex:none}
.group{display:flex;flex-direction:column;border-right:1px solid #c5cad1}
.body{display:flex;height:69px;padding-top:6px}
.group footer{height:16px;line-height:17px;text-align:center;color:#6a7380;position:relative}
.group footer u{position:absolute;right:5px;top:7px;width:7px;height:7px;border:solid #999;border-width:1px 0 0 1px}
.group footer u::after{content:"";position:absolute;right:0;bottom:0;border:2px solid #888;border-left-color:transparent;border-top-color:transparent}
.g-clip{width:151px}.g-font{width:209px}.g-align{width:259px}.g-num{width:143px}.g-styles{width:175px}.g-cells{width:135px}.g-edit{width:177px}
.big{display:flex;flex-direction:column;align-items:center;line-height:13px}
.big svg{margin-top:1px;margin-bottom:5px}
.big>span+span{display:flex;align-items:center}
.big>i{margin:4px 0 0}
.big i{margin-left:3px}
.big>i:last-child{margin-left:0}
.paste{width:37px;margin-left:6px}
.paste svg{margin:0 0 4px}
.list{margin-left:4px;margin-top:-3px}
.list div{display:flex;align-items:center;height:22px;gap:3px}
.g-clip .list div{letter-spacing:-.45px}
.list i{margin-left:3px}
.rows{flex-direction:column;padding:10px 0 0 5px}
.row{display:flex}
.combo{height:22px;border:1px solid #cfd3d9;background:#fff;color:#111;display:flex;align-items:center;justify-content:space-between;padding:0 4px 0 3px}
.c1{width:113px}.c2{width:43px;border-left:0}.c3{width:134px}
.row svg{margin-left:2px}
.r2{margin-top:7px}
.wraps{margin:4px 0 0 1px}
.wrap,.merge{display:flex;align-items:center;height:22px;padding-left:3px;gap:3px}
.wrap{letter-spacing:-.45px}
.merge{margin-top:7px;width:119px;border:1px solid #c2963a;border-radius:2px;background:linear-gradient(#fbd36b,#ffe07c);padding-left:2px}
.merge span{width:82px;letter-spacing:-.45px}
.merge b{border-left:1px solid #c2963a;height:20px;flex:1;display:flex;align-items:center;justify-content:center}
.merge b i{margin:0}
.b79{width:79px}.b46{width:46px}.b48{width:49px}.b42{width:42px}.b43{width:43px}
.b46,.b48{letter-spacing:-.6px}
.b46 i,.b48 i{margin-left:2px}
.g-cells .body{padding-left:4px}
.g-edit .list{width:79px;margin-left:7px}
.g-edit .list div{gap:4px;letter-spacing:-.45px}
.g-edit .list i{margin-left:3px}
.formula{display:flex;height:28px;padding:3px 0 4px;background:#e1e5eb;border-bottom:1px solid #6d7683;flex:none}
.name{width:160px;background:#fff;display:flex;justify-content:center;align-items:center;padding-left:60px;gap:65px;color:#111;font-size:13px;border-top:1px solid #9ba3af;border-bottom:1px solid #9ba3af}
.excel .name i{border-width:5px 4px 0;border-top-color:#333;margin:0}
.input{flex:1;background:#fff;border:1px solid #9ba3af}
.expand{width:15px;background:#dde2e9;border:1px solid #9ba3af;display:flex;align-items:center;justify-content:center}
.work{display:flex;height:514px;flex:none}
.clip{width:1266px;height:514px;overflow:hidden}
.sheet{border-collapse:separate;border-spacing:0;table-layout:fixed;width:1285px;font-family:Lato,sans-serif;font-size:13px;letter-spacing:.1px;color:#000}
.k0{width:26px}.k1{width:19px}.k2{width:70px}.k3{width:78px}.k4{width:81px}.k5{width:243px}.k6{width:165px}.k7{width:184px}.k8{width:177px}.k9{width:242px}
.sheet td,.sheet th{padding:0;height:16px;line-height:15px;border-right:1px solid #d5d7da;border-bottom:1px solid #d5d7da;text-align:center;overflow:hidden}
.sheet th{background:#dfe3e9;border-color:#9ea7b3;font-weight:400;font-size:13.500px;color:#333;vertical-align:bottom}
.sheet .head th{height:19px;line-height:18px;vertical-align:middle}
.head svg{margin-left:12px}
.sheet .t td,.sheet .t th{height:19px;line-height:18px}
.sheet .tt td,.sheet .tt th{height:38px;line-height:18px}
.sheet .bold td{font-weight:700;letter-spacing:.12px}
.sheet td.l{text-align:left;padding-left:2px}
.sheet td.heading{letter-spacing:-.08px}
.sheet td.r{text-align:right;padding-right:2px}
.sheet td.last{padding-right:20px}
.sheet td.profile{padding-left:985px;letter-spacing:-.6px}
.sheets{display:flex;height:16px;background:#dde2e9;color:#333;flex:none}
.sheets b{background:#fff;width:202px;padding-left:8px;font:700 13.500px/16px Lato,sans-serif;letter-spacing:.1px;color:#3c4048}
.sp{flex:1}
.sheets svg:last-child{margin-right:15px}
.status{display:flex;justify-content:space-between;flex:1;background:linear-gradient(#e6e9ed,#d0d4d9 30%,#bfc4ca);border-top:1px solid #8d959f;line-height:20px}
.status span{padding-left:8px;width:49px;border-right:1px solid #8d949c}
```
